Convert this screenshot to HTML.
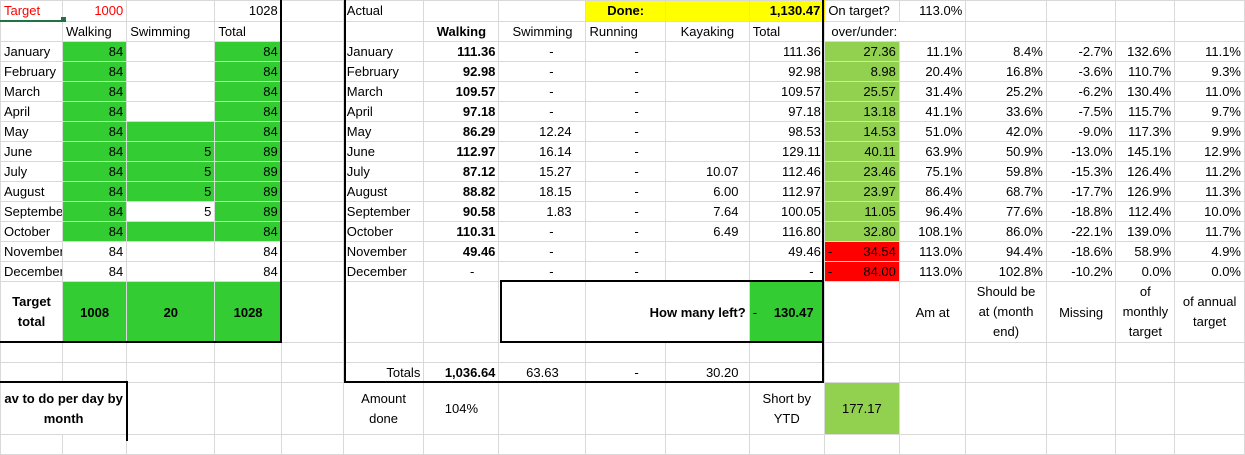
<!DOCTYPE html>
<html><head><meta charset="utf-8"><style>
html,body{margin:0;padding:0;background:#fff;width:1245px;height:441px;overflow:hidden}
table{border-collapse:collapse;table-layout:fixed;width:1245px;font-family:"Liberation Sans",sans-serif;font-size:13px;color:#000;position:absolute;left:0;top:0}
td{border:1px solid #d9d9d9;padding:0 3px;white-space:nowrap;overflow:hidden;height:19px;line-height:15px}
.r{text-align:right}.c{text-align:center}.b{font-weight:bold}
.g{background:#33cc33}.lg{background:#92d050}.rd{background:#ff0000}.y{background:#ffff00}
.red{color:#ff0000}
.d{float:left}
.w{line-height:20px}
.L{position:absolute;background:#000}
</style></head><body>
<table>
<colgroup>
<col style="width:57px"><col style="width:59px"><col style="width:81px"><col style="width:61px"><col style="width:57px"><col style="width:74px"><col style="width:69px"><col style="width:80px"><col style="width:73px"><col style="width:77px"><col style="width:69px"><col style="width:69px"><col style="width:61px"><col style="width:74px"><col style="width:64px"><col style="width:54px"><col style="width:64px">
</colgroup>
<tr><td class="red" style="border-bottom:2px solid #217346">Target</td><td class="r red">1000</td><td></td><td class="r">1028</td><td></td><td>Actual</td><td></td><td></td><td class="y c b">Done:</td><td class="y"></td><td class="y r b">1,130.47</td><td style="border-left:2px solid #ffd800">On target?</td><td class="r">113.0%</td><td></td><td></td><td></td><td></td></tr>
<tr><td></td><td>Walking</td><td>Swimming</td><td>Total</td><td></td><td></td><td class="c b">Walking</td><td class="c">Swimming</td><td>Running</td><td class="c">Kayaking</td><td>Total</td><td colspan="2">&nbsp;over/under:</td><td></td><td></td><td></td><td></td></tr>
<tr><td>January</td><td class="g r">84</td><td></td><td class="g r">84</td><td></td><td>January</td><td class="r b">111.36</td><td class="c">&nbsp;&nbsp;&nbsp;&nbsp;&nbsp;-</td><td class="c">&nbsp;&nbsp;&nbsp;&nbsp;&nbsp;&nbsp;-</td><td></td><td class="r">111.36</td><td class="lg r">27.36</td><td class="r">11.1%</td><td class="r">8.4%</td><td class="r">-2.7%</td><td class="r">132.6%</td><td class="r">11.1%</td></tr>
<tr><td>February</td><td class="g r">84</td><td></td><td class="g r">84</td><td></td><td>February</td><td class="r b">92.98</td><td class="c">&nbsp;&nbsp;&nbsp;&nbsp;&nbsp;-</td><td class="c">&nbsp;&nbsp;&nbsp;&nbsp;&nbsp;&nbsp;-</td><td></td><td class="r">92.98</td><td class="lg r">8.98</td><td class="r">20.4%</td><td class="r">16.8%</td><td class="r">-3.6%</td><td class="r">110.7%</td><td class="r">9.3%</td></tr>
<tr><td>March</td><td class="g r">84</td><td></td><td class="g r">84</td><td></td><td>March</td><td class="r b">109.57</td><td class="c">&nbsp;&nbsp;&nbsp;&nbsp;&nbsp;-</td><td class="c">&nbsp;&nbsp;&nbsp;&nbsp;&nbsp;&nbsp;-</td><td></td><td class="r">109.57</td><td class="lg r">25.57</td><td class="r">31.4%</td><td class="r">25.2%</td><td class="r">-6.2%</td><td class="r">130.4%</td><td class="r">11.0%</td></tr>
<tr><td>April</td><td class="g r">84</td><td></td><td class="g r">84</td><td></td><td>April</td><td class="r b">97.18</td><td class="c">&nbsp;&nbsp;&nbsp;&nbsp;&nbsp;-</td><td class="c">&nbsp;&nbsp;&nbsp;&nbsp;&nbsp;&nbsp;-</td><td></td><td class="r">97.18</td><td class="lg r">13.18</td><td class="r">41.1%</td><td class="r">33.6%</td><td class="r">-7.5%</td><td class="r">115.7%</td><td class="r">9.7%</td></tr>
<tr><td>May</td><td class="g r">84</td><td class="g"></td><td class="g r">84</td><td></td><td>May</td><td class="r b">86.29</td><td class="r">12.24&nbsp;&nbsp;&nbsp;</td><td class="c">&nbsp;&nbsp;&nbsp;&nbsp;&nbsp;&nbsp;-</td><td></td><td class="r">98.53</td><td class="lg r">14.53</td><td class="r">51.0%</td><td class="r">42.0%</td><td class="r">-9.0%</td><td class="r">117.3%</td><td class="r">9.9%</td></tr>
<tr><td>June</td><td class="g r">84</td><td class="g r">5</td><td class="g r">89</td><td></td><td>June</td><td class="r b">112.97</td><td class="r">16.14&nbsp;&nbsp;&nbsp;</td><td class="c">&nbsp;&nbsp;&nbsp;&nbsp;&nbsp;&nbsp;-</td><td></td><td class="r">129.11</td><td class="lg r">40.11</td><td class="r">63.9%</td><td class="r">50.9%</td><td class="r">-13.0%</td><td class="r">145.1%</td><td class="r">12.9%</td></tr>
<tr><td>July</td><td class="g r">84</td><td class="g r">5</td><td class="g r">89</td><td></td><td>July</td><td class="r b">87.12</td><td class="r">15.27&nbsp;&nbsp;&nbsp;</td><td class="c">&nbsp;&nbsp;&nbsp;&nbsp;&nbsp;&nbsp;-</td><td class="r">10.07&nbsp;&nbsp;</td><td class="r">112.46</td><td class="lg r">23.46</td><td class="r">75.1%</td><td class="r">59.8%</td><td class="r">-15.3%</td><td class="r">126.4%</td><td class="r">11.2%</td></tr>
<tr><td>August</td><td class="g r">84</td><td class="g r">5</td><td class="g r">89</td><td></td><td>August</td><td class="r b">88.82</td><td class="r">18.15&nbsp;&nbsp;&nbsp;</td><td class="c">&nbsp;&nbsp;&nbsp;&nbsp;&nbsp;&nbsp;-</td><td class="r">6.00&nbsp;&nbsp;</td><td class="r">112.97</td><td class="lg r">23.97</td><td class="r">86.4%</td><td class="r">68.7%</td><td class="r">-17.7%</td><td class="r">126.9%</td><td class="r">11.3%</td></tr>
<tr><td>September</td><td class="g r">84</td><td class="r">5</td><td class="g r">89</td><td></td><td>September</td><td class="r b">90.58</td><td class="r">1.83&nbsp;&nbsp;&nbsp;</td><td class="c">&nbsp;&nbsp;&nbsp;&nbsp;&nbsp;&nbsp;-</td><td class="r">7.64&nbsp;&nbsp;</td><td class="r">100.05</td><td class="lg r">11.05</td><td class="r">96.4%</td><td class="r">77.6%</td><td class="r">-18.8%</td><td class="r">112.4%</td><td class="r">10.0%</td></tr>
<tr><td>October</td><td class="g r">84</td><td class="g"></td><td class="g r">84</td><td></td><td>October</td><td class="r b">110.31</td><td class="c">&nbsp;&nbsp;&nbsp;&nbsp;&nbsp;-</td><td class="c">&nbsp;&nbsp;&nbsp;&nbsp;&nbsp;&nbsp;-</td><td class="r">6.49&nbsp;&nbsp;</td><td class="r">116.80</td><td class="lg r">32.80</td><td class="r">108.1%</td><td class="r">86.0%</td><td class="r">-22.1%</td><td class="r">139.0%</td><td class="r">11.7%</td></tr>
<tr><td>November</td><td class="r">84</td><td></td><td class="r">84</td><td></td><td>November</td><td class="r b">49.46</td><td class="c">&nbsp;&nbsp;&nbsp;&nbsp;&nbsp;-</td><td class="c">&nbsp;&nbsp;&nbsp;&nbsp;&nbsp;&nbsp;-</td><td></td><td class="r">49.46</td><td class="rd r"><span class="d">-</span>34.54</td><td class="r">113.0%</td><td class="r">94.4%</td><td class="r">-18.6%</td><td class="r">58.9%</td><td class="r">4.9%</td></tr>
<tr><td>December</td><td class="r">84</td><td></td><td class="r">84</td><td></td><td>December</td><td class="c">&nbsp;&nbsp;&nbsp;&nbsp;&nbsp;&nbsp;-</td><td class="c">&nbsp;&nbsp;&nbsp;&nbsp;&nbsp;-</td><td class="c">&nbsp;&nbsp;&nbsp;&nbsp;&nbsp;&nbsp;-</td><td></td><td class="r">-&nbsp;&nbsp;</td><td class="rd r"><span class="d">-</span>84.00</td><td class="r">113.0%</td><td class="r">102.8%</td><td class="r">-10.2%</td><td class="r">0.0%</td><td class="r">0.0%</td></tr>
<tr style="height:61px"><td class="c b w">Target<br>total</td><td class="g c b">1008</td><td class="g c b">20</td><td class="g c b">1028</td><td></td><td></td><td></td><td></td><td colspan="2" class="r b">How many left?</td><td class="g r b"><span class="d" style="font-weight:normal">-</span>130.47&nbsp;&nbsp;</td><td></td><td class="c">Am at</td><td class="c w">Should be<br>at (month<br>end)</td><td class="c">Missing</td><td class="c w">of<br>monthly<br>target</td><td class="c w">of annual<br>target</td></tr>
<tr><td></td><td></td><td></td><td></td><td></td><td></td><td></td><td></td><td></td><td></td><td></td><td></td><td></td><td></td><td></td><td></td><td></td></tr>
<tr><td></td><td></td><td></td><td></td><td></td><td class="r">Totals</td><td class="r b">1,036.64</td><td class="c">63.63</td><td class="c">&nbsp;&nbsp;&nbsp;&nbsp;&nbsp;&nbsp;-</td><td class="r">30.20&nbsp;&nbsp;</td><td></td><td></td><td></td><td></td><td></td><td></td><td></td></tr>
<tr style="height:52px"><td colspan="2" class="c b w">av to do per day by<br>month</td><td></td><td></td><td></td><td class="c w">Amount<br>done</td><td class="c">104%</td><td></td><td></td><td></td><td class="c w">Short by<br>YTD</td><td class="lg c">177.17</td><td></td><td></td><td></td><td></td><td></td></tr>
<tr style="height:6px"><td style="height:5px"></td><td></td><td></td><td></td><td></td><td></td><td></td><td></td><td></td><td></td><td></td><td></td><td></td><td></td><td></td><td></td><td></td></tr>
</table>
<div class="L" style="left:280px;top:0;width:2px;height:343px"></div>
<div class="L" style="left:0;top:341px;width:282px;height:2px"></div>
<div class="L" style="left:344px;top:0;width:2px;height:383px"></div>
<div class="L" style="left:344px;top:381px;width:480px;height:2px"></div>
<div class="L" style="left:822px;top:0;width:2px;height:383px"></div>
<div class="L" style="left:500px;top:280px;width:324px;height:2px"></div>
<div class="L" style="left:500px;top:280px;width:2px;height:62px"></div>
<div class="L" style="left:500px;top:341px;width:324px;height:2px"></div>
<div class="L" style="left:0;top:381px;width:128px;height:2px"></div>
<div class="L" style="left:126px;top:381px;width:2px;height:60px"></div>
<div class="L" style="left:61px;top:17px;width:5px;height:5px;background:#217346"></div>
</body></html>
